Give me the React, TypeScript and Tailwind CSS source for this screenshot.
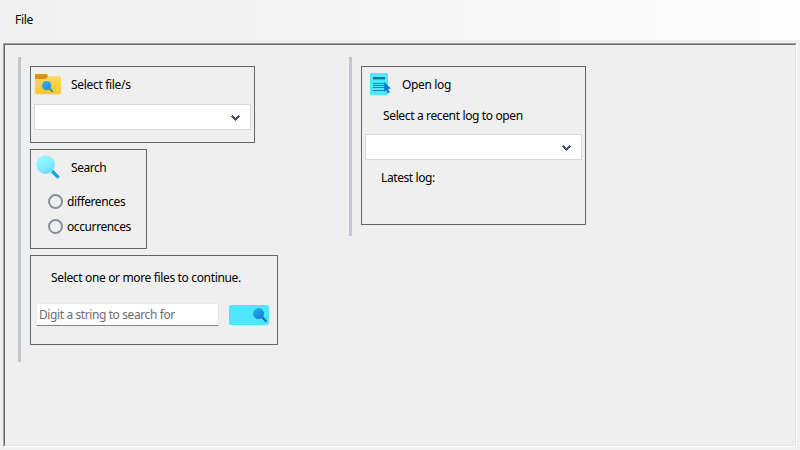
import type { ReactNode } from "react";

function Chevron() {
  return (
    <svg width="9" height="6" viewBox="0 0 9 6" shapeRendering="crispEdges" fill="#44546f">
      <path d="M1 0h1v1h1v1h1v1h1v-1h1v-1h1v-1h1v1h1v1h-1v1h-1v1h-1v1h-1v1h-1v-1h-1v-1h-1v-1h-1v-1h-1v-1h1z" />
    </svg>
  );
}

function ComboBox() {
  return (
    <div className="flex h-[26px] w-[217px] items-center justify-end border border-[#d5d9e0] bg-white pr-[10px] pt-0.5">
      <Chevron />
    </div>
  );
}

function FolderIcon() {
  return (
    <svg className="block" width="26" height="21" viewBox="0 0 26 21">
      <defs>
        <linearGradient id="folder" x1="0" y1="0" x2="0" y2="1">
          <stop offset="0" stopColor="#ffd766" />
          <stop offset="1" stopColor="#ffc62d" />
        </linearGradient>
        <linearGradient id="lens" x1="0" y1="0" x2="1" y2="1">
          <stop offset="0" stopColor="#3ab8f2" />
          <stop offset="1" stopColor="#1b86dc" />
        </linearGradient>
      </defs>
      <path d="M0 1.2Q0 0 1.2 0H11.2L13 1.6V5H0Z" fill="#dc9305" />
      <path d="M0 5H10.5L13.3 2.3H24.8Q26 2.3 26 3.5V19Q26 20.3 24.8 20.3H1.2Q0 20.3 0 19Z" fill="url(#folder)" />
      <path d="M14.5 14.5L17.8 17.8" stroke="#2c8fc9" strokeWidth="1.9" />
      <circle cx="11.6" cy="11.6" r="4.7" fill="url(#lens)" />
    </svg>
  );
}

function SearchIcon() {
  return (
    <svg className="block" width="24" height="24" viewBox="0 0 24 24">
      <defs>
        <linearGradient id="glass" x1="0.2" y1="0" x2="0.8" y2="1">
          <stop offset="0" stopColor="#98f8ff" />
          <stop offset="0.5" stopColor="#88efff" />
          <stop offset="1" stopColor="#63d5fa" />
        </linearGradient>
      </defs>
      <path d="M15.6 15.6L22.6 22.6" stroke="#149ee4" strokeWidth="3.2" />
      <circle cx="9.6" cy="9.6" r="9.4" fill="url(#glass)" />
    </svg>
  );
}

function SmallSearchIcon() {
  return (
    <svg className="block" width="15" height="15" viewBox="0 0 15 15">
      <defs>
        <linearGradient id="smallGlass" x1="0.2" y1="0" x2="0.8" y2="1">
          <stop offset="0" stopColor="#2ba9ec" />
          <stop offset="1" stopColor="#127fd8" />
        </linearGradient>
      </defs>
      <path d="M9.2 9.2L13.6 13.6" stroke="#1674b8" strokeWidth="2.4" />
      <circle cx="5.6" cy="5.6" r="5.5" fill="url(#smallGlass)" />
    </svg>
  );
}

function LogIcon() {
  return (
    <svg className="block" width="21" height="22" viewBox="0 0 21 22">
      <rect width="18" height="22" rx="1" fill="#50e6ff" />
      <rect x="3" y="4" width="12" height="2.4" fill="#087a98" />
      <path d="M3 10.5H14.5M3 12.5H14.5M3 14.5H15M3 17.5H15" stroke="#168ba9" strokeWidth="1.2" />
      <path d="M14.2 9L21 15.6L18 16.1L19.8 19.6L17.8 20.3L16.2 17L14.2 19Z" fill="#0878d4" />
    </svg>
  );
}

function Group({ className, children }: { className: string; children: ReactNode }) {
  return <section className={`border border-[#646464] ${className}`}>{children}</section>;
}

function Radio({ label, className }: { label: string; className: string }) {
  return (
    <label className="flex h-[25px] items-center">
      <span className="h-[15px] w-[15px] rounded-full border-2 border-[#858f9b]" />
      <span className={`ml-1 ${className}`}>{label}</span>
    </label>
  );
}

export default function App() {
  return (
    <div className="flex h-[450px] w-[800px] flex-col overflow-hidden whitespace-nowrap bg-[#f0f0f0] font-['Noto_Sans',sans-serif] text-[12px] leading-4 text-black">
      <header className="flex h-10 items-center bg-linear-to-r from-[#f0f0f0] to-[#fdfdfd] pl-[15px]">
        <span className="tracking-[-0.3px]">File</span>
      </header>
      <div className="mx-[3px] mt-[3px] h-[404px] border border-t-[#a0a0a0] border-r-white border-b-white border-l-[#a0a0a0]">
        <main className="flex h-full items-start border border-t-[#696969] border-r-[#e3e3e3] border-b-[#e3e3e3] border-l-[#696969] bg-[#efefef] pl-[13px] pt-3">
          <div className="flex h-[305px] w-[331px] flex-col items-start gap-1.5 border-l-3 border-[#c0c8d2] pl-[9px] pt-[9px]">
            <Group className="h-[77px] w-[225px] pl-[3px] pt-[7px]">
              <div className="flex h-[30px] items-start pl-px">
                <FolderIcon />
                <span className="ml-[10px] mt-[3px] tracking-[-0.32px]">Select file/s</span>
              </div>
              <ComboBox />
            </Group>
            <Group className="h-[100px] w-[117px] pl-[5px] pt-[5px]">
              <div className="flex h-[34px] items-start">
                <SearchIcon />
                <span className="ml-[11px] mt-[5px] tracking-[-0.45px]">Search</span>
              </div>
              <div className="pl-3">
                <Radio label="differences" className="tracking-[-0.4px]" />
                <Radio label="occurrences" className="tracking-[-0.4px]" />
              </div>
            </Group>
            <Group className="h-[90px] w-[248px] pl-[5px] pt-[14px]">
              <p className="ml-[15px] tracking-[-0.35px]">Select one or more files to continue.</p>
              <div className="mt-[17px] flex items-start">
                <div className="flex h-[23px] w-[183px] items-center border border-t-[#e8e8e8] border-r-[#e3e3e3] border-b-[#868686] border-l-[#e8e8e8] bg-white pl-0.5 text-[#6d6d6d]">
                  <span className="tracking-[-0.4px]">Digit a string to search for</span>
                </div>
                <button className="ml-[10px] mt-0.5 flex h-5 w-10 items-center justify-end rounded-[2px] bg-[#50e6ff] pr-px">
                  <SmallSearchIcon />
                </button>
              </div>
            </Group>
          </div>
          <div className="h-[179px] border-l-3 border-[#c0c8d2] pl-[9px] pt-[9px]">
            <Group className="h-[159px] w-[225px] pl-[3px] pt-[6px]">
              <div className="flex h-[35px] items-start pl-[5px]">
                <LogIcon />
                <span className="ml-[11px] mt-1 tracking-[-0.35px]">Open log</span>
              </div>
              <p className="ml-[18px] h-[26px] tracking-[-0.36px]">Select a recent log to open</p>
              <ComboBox />
              <p className="ml-4 mt-[10px] tracking-[-0.4px]">Latest log:</p>
            </Group>
          </div>
        </main>
      </div>
    </div>
  );
}
